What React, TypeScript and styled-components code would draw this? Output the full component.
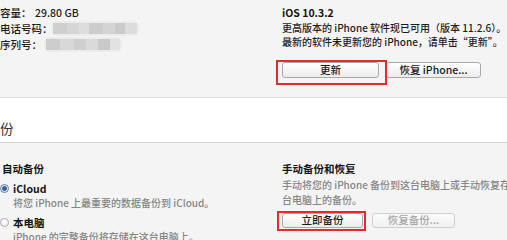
import React from "react";
import styled, { createGlobalStyle } from "styled-components";

const GlobalStyle = createGlobalStyle`
  html, body { margin: 0; padding: 0; background: #f4f4f4; }
  body {
    font-family: "Noto Sans CJK SC", "Noto Sans", sans-serif;
    font-size: 10px;
    font-weight: 500;
    color: #1c1c1c;
  }
`;

const Page = styled.div`
  width: 507px;
  height: 240px;
  overflow: hidden;
  background: #f4f4f4;
`;

const Columns = styled.section<{ $top: number; $height?: number }>`
  display: grid;
  grid-template-columns: 282px 1fr;
  padding-top: ${(p) => p.$top}px;
  ${(p) => (p.$height ? `height: ${p.$height}px;` : "")}
  box-sizing: border-box;
`;

const InfoList = styled.div`
  display: flex;
  flex-direction: column;
`;

const InfoRow = styled.div`
  display: flex;
  align-items: center;
  height: 16px;
  white-space: nowrap;
  font-size: 10.5px;
`;

const Label = styled.span`
  width: 35px;
  flex: none;
`;

const WideLabel = styled.span`
  flex: none;
`;

const Mosaic = styled.div<{ $ml: number }>`
  display: flex;
  margin-left: ${(p) => p.$ml}px;
  filter: blur(0.6px);
  padding: 2px;
  background: #ececec;
  border-radius: 6px;
`;

const Tile = styled.span<{ $w: number; $c: string }>`
  display: block;
  width: ${(p) => p.$w}px;
  height: 11px;
  background: ${(p) => p.$c};
`;

const Column = styled.div`
  display: flex;
  flex-direction: column;
  white-space: nowrap;
`;

const Title = styled.div<{ $h?: number; $indent?: number }>`
  font-weight: 700;
  font-size: 10.5px;
  line-height: ${(p) => p.$h ?? 16}px;
  height: ${(p) => p.$h ?? 16}px;
  padding-left: ${(p) => p.$indent ?? 0}px;
  color: #141414;
`;

const Text = styled.div<{ $lh: number; $muted?: boolean; $indent?: number; $mt?: number }>`
  line-height: ${(p) => p.$lh}px;
  color: ${(p) => (p.$muted ? "#858585" : "#1c1c1c")};
  padding-left: ${(p) => p.$indent ?? 0}px;
  margin-top: ${(p) => p.$mt ?? 0}px;
`;

const ButtonRow = styled.div<{ $mt: number; $gap: number }>`
  display: flex;
  margin-top: ${(p) => p.$mt}px;
  gap: ${(p) => p.$gap}px;
`;

const Highlight = styled.div<{ $l: number; $t: number; $r: number; $b: number }>`
  position: relative;
  display: flex;
  &::after {
    content: "";
    position: absolute;
    left: -${(p) => p.$l}px;
    top: -${(p) => p.$t}px;
    right: -${(p) => p.$r}px;
    bottom: -${(p) => p.$b}px;
    border: 2px solid #e8282b;
    pointer-events: none;
  }
`;

const Button = styled.button<{ $w: number; $h: number }>`
  width: ${(p) => p.$w}px;
  height: ${(p) => p.$h}px;
  padding: 0;
  box-sizing: border-box;
  border: 1px solid #a9a9a9;
  border-radius: 3px;
  background: linear-gradient(#ffffff, #ececec);
  font-family: inherit;
  font-size: 10.5px;
  font-weight: 500;
  line-height: 1;
  color: #1a1a1a;
  display: flex;
  align-items: center;
  justify-content: center;
  &:disabled {
    color: #a8a8a8;
    border-color: #cfcfcf;
    background: linear-gradient(#fbfbfb, #f0f0f0);
  }
`;

const Band = styled.div`
  height: 46px;
  box-sizing: border-box;
  background: #ffffff;
  border-top: 1px solid #dedede;
  border-bottom: 1px solid #d6d6d6;
  padding-top: 21px;
  font-size: 13.5px;
  font-weight: 400;
  line-height: 18px;
  color: #333;
`;

const RadioRow = styled.div<{ $mt: number }>`
  display: flex;
  align-items: center;
  gap: 4px;
  height: 16px;
  margin-top: ${(p) => p.$mt}px;
  font-size: 10.5px;
  font-weight: 700;
  color: #141414;
`;

const Radio = styled.span<{ $on?: boolean }>`
  width: 9px;
  height: 9px;
  box-sizing: border-box;
  border-radius: 50%;
  border: 1px solid ${(p) => (p.$on ? "#5f7fa8" : "#a9a9a9")};
  background: ${(p) =>
    p.$on
      ? "radial-gradient(circle, #2f5f9e 0 2px, #dbe6f3 2.6px)"
      : "linear-gradient(#ffffff, #f0f0f0)"};
  flex: none;
`;

export default function App() {
  return (
    <Page>
      <GlobalStyle />
      <Columns $top={4} $height={97}>
        <InfoList>
          <InfoRow>
            <Label>容量：</Label>
            <span>29.80 GB</span>
          </InfoRow>
          <InfoRow>
            <WideLabel>电话号码：</WideLabel>
            <Mosaic $ml={-2}>
              <Tile $w={14} $c="#cfcfcf" />
              <Tile $w={12} $c="#d6d6d6" />
              <Tile $w={10} $c="#dddddd" />
              <Tile $w={14} $c="#cdcdcd" />
              <Tile $w={12} $c="#d4d4d4" />
              <Tile $w={10} $c="#cacaca" />
              <Tile $w={12} $c="#dcdcdc" />
            </Mosaic>
          </InfoRow>
          <InfoRow>
            <WideLabel>序列号：</WideLabel>
            <Mosaic $ml={2}>
              <Tile $w={14} $c="#cccccc" />
              <Tile $w={14} $c="#d8d8d8" />
              <Tile $w={12} $c="#cfcfcf" />
              <Tile $w={12} $c="#dadada" />
              <Tile $w={12} $c="#c9c9c9" />
              <Tile $w={10} $c="#e2e2e2" />
            </Mosaic>
          </InfoRow>
        </InfoList>
        <Column>
          <Title $h={17}>iOS 10.3.2</Title>
          <Text $lh={14}>更高版本的 iPhone 软件现已可用（版本 11.2.6）。</Text>
          <Text $lh={14}>最新的软件未更新您的 iPhone，请单击“更新”。</Text>
          <ButtonRow $mt={13} $gap={7}>
            <Highlight $l={6} $t={2} $r={8} $b={7}>
              <Button $w={97} $h={16}>更新</Button>
            </Highlight>
            <Button $w={95} $h={16}>恢复 iPhone...</Button>
          </ButtonRow>
        </Column>
      </Columns>
      <Band>份</Band>
      <Columns $top={18}>
        <Column>
          <Title $indent={2}>自动备份</Title>
          <RadioRow $mt={3}>
            <Radio $on />
            <span>iCloud</span>
          </RadioRow>
          <Text $lh={14} $muted $indent={13}>将您 iPhone 上最重要的数据备份到 iCloud。</Text>
          <RadioRow $mt={4}>
            <Radio />
            <span>本电脑</span>
          </RadioRow>
          <Text $lh={14} $muted $indent={13}>iPhone 的完整备份将存储在这台电脑上。</Text>
        </Column>
        <Column>
          <Title>手动备份和恢复</Title>
          <Text $lh={15} $muted>手动将您的 iPhone 备份到这台电脑上或手动恢复存储在这</Text>
          <Text $lh={15} $muted>台电脑上的备份。</Text>
          <ButtonRow $mt={6} $gap={9}>
            <Highlight $l={5} $t={2} $r={3} $b={3}>
              <Button $w={81} $h={15}>立即备份</Button>
            </Highlight>
            <Button $w={83} $h={15} disabled>恢复备份...</Button>
          </ButtonRow>
        </Column>
      </Columns>
    </Page>
  );
}
